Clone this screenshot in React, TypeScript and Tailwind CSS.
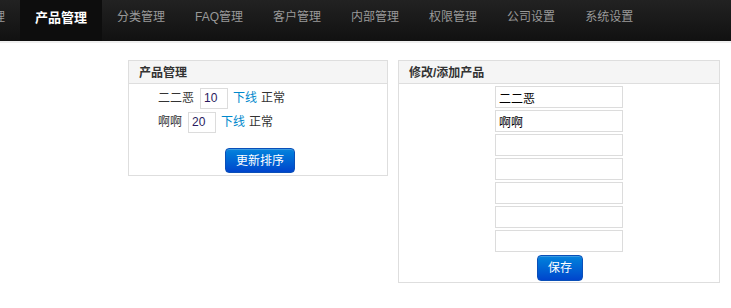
import React from "react";

const navItems = [
  "首页管理",
  "产品管理",
  "分类管理",
  "FAQ管理",
  "客户管理",
  "内部管理",
  "权限管理",
  "公司设置",
  "系统设置",
];

const products = [
  { name: "二二恶", sort: "10" },
  { name: "啊啊", sort: "20" },
];

const fields = ["二二恶", "啊啊", "", "", "", "", ""];

const btnClass =
  "rounded-[4px] border border-[#0a4fb8] bg-gradient-to-b from-[#0a83dc] to-[#0044cc] text-white text-[12px] leading-[16px] shadow-[inset_0_1px_0_rgba(255,255,255,0.2)]";

export default function App() {
  return (
    <div
      className="min-h-screen bg-white text-[#333] text-[12px]"
      style={{ fontFamily: '"Liberation Sans", "Noto Sans CJK SC", sans-serif' }}
    >
      {/* Top nav */}
      <div className="h-[41px] bg-gradient-to-b from-[#222] to-[#111] overflow-hidden">
        <ul className="flex ml-[-58px] h-full">
          {navItems.map((item, i) => (
            <li
              key={item}
              className={
                i === 1
                  ? "px-[15px] h-full leading-[35px] bg-[#0d0d0d] text-white font-bold text-[13px]"
                  : "px-[15px] h-full leading-[35px] text-[#999] text-[12px]"
              }
            >
              {item}
            </li>
          ))}
        </ul>
      </div>
      <div className="h-[2px] bg-[#efefef]"></div>

      <div className="flex items-start gap-[10px] ml-[128px] mt-[17px]">
        {/* Product list */}
        <div className="w-[260px] border border-[#dedede]">
          <div className="h-[23px] bg-[#f5f5f5] border-b border-[#dedede] pl-[10px] font-bold leading-[24px]">
            产品管理
          </div>
          <div className="pt-[2px] pb-[2px]">
            {products.map((p) => (
              <div key={p.name} className="h-[24px] flex items-center pl-[29px]">
                <span>{p.name}</span>
                <input
                  readOnly
                  value={p.sort}
                  className="ml-[6px] w-[28px] h-[21px] border border-[#dcdcdc] px-[3px] text-[12px] text-[#2a1a5e] outline-none"
                />
                <a className="ml-[5px] text-[#0088cc]">下线</a>
                <span className="ml-[4px]">正常</span>
              </div>
            ))}
            <div className="flex justify-center mt-[14px] pl-[4px]">
              <button className={`${btnClass} w-[70px] h-[25px]`}>更新排序</button>
            </div>
          </div>
        </div>

        {/* Edit form */}
        <div className="w-[322px] border border-[#dedede]">
          <div className="h-[23px] bg-[#f5f5f5] border-b border-[#dedede] pl-[10px] font-bold leading-[24px]">
            修改/添加产品
          </div>
          <div className="pt-[2px] pb-[1px] flex flex-col items-center">
            {fields.map((f, i) => (
              <input
                key={i}
                readOnly
                value={f}
                className="w-[128px] h-[22px] mb-[2px] border border-[#dcdcdc] px-[3px] text-[12px] text-black outline-none"
              />
            ))}
            <button className={`${btnClass} w-[46px] h-[26px] mt-[1px] ml-[2px]`}>保存</button>
          </div>
        </div>
      </div>
    </div>
  );
}
